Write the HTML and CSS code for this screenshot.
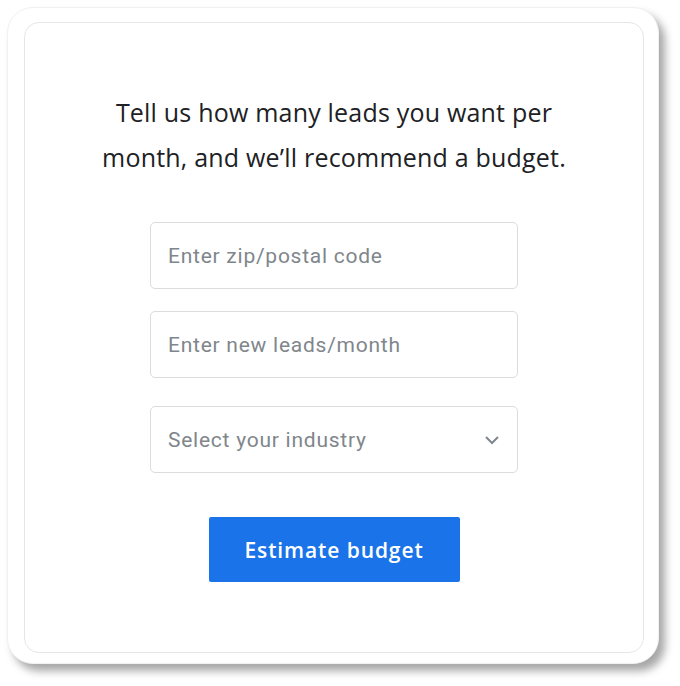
FILE: index.html
```html
<!DOCTYPE html>
<html lang="en">
<head>
<meta charset="utf-8">
<title>Estimate budget</title>
<link rel="stylesheet" href="styles.css">
</head>
<body>
<div class="frame">
  <div class="card">
    <p class="title">Tell us how many leads you want per<br>month, and we’ll recommend a budget.</p>
    <form class="form">
      <div class="field">Enter zip/postal code</div>
      <div class="field">Enter new leads/month</div>
      <div class="field select">
        <span>Select your industry</span>
        <svg class="chev" width="16" height="10" viewBox="0 0 16 10"><path d="M2 2 L8 8 L14 2" fill="none" stroke="#80868b" stroke-width="2"/></svg>
      </div>
      <button type="button" class="btn">Estimate budget</button>
    </form>
  </div>
</div>
</body>
</html>
```
FILE: styles.css
```css
html, body { margin: 0; padding: 0; background: #fff; }
body { width: 680px; height: 686px; font-family: Roboto, "Noto Sans", sans-serif; }
.frame {
  box-sizing: border-box;
  margin: 7px 0 0 7px;
  width: 652px;
  height: 657px;
  border-radius: 26px;
  background: #fff;
  border: 1px solid #f1f1f1;
  box-shadow: 6px 7px 8px rgba(0,0,0,0.35);
  padding: 14px 14px 10px 16px;
}
.card {
  box-sizing: border-box;
  width: 620px;
  height: 631px;
  border: 1px solid #e6e6e6;
  border-radius: 15px;
  padding-top: 67px;
  display: flex;
  flex-direction: column;
  align-items: center;
}
.title {
  margin: 0;
  font-family: "Open Sans", Roboto, sans-serif;
  font-size: 25px;
  line-height: 45px;
  letter-spacing: 0.2px;
  color: #202124;
  text-align: center;
}
.form {
  margin-top: 42px;
  display: flex;
  flex-direction: column;
  align-items: center;
}
.field {
  box-sizing: border-box;
  width: 368px;
  height: 67px;
  border: 1px solid #dadce0;
  border-radius: 5px;
  padding: 0 17px;
  display: flex;
  align-items: center;
  font-size: 21px;
  letter-spacing: 0.75px;
  color: #80868b;
  margin-bottom: 22px;
}
.field.select { margin-top: 6px; justify-content: space-between; margin-bottom: 44px; }
.btn {
  width: 251px;
  height: 65px;
  border: none;
  border-radius: 2px;
  background: #1a73e8;
  color: #fff;
  font-family: "Open Sans", Roboto, sans-serif;
  font-size: 21px;
  font-weight: 600;
  letter-spacing: 0.9px;
  padding: 0;
}
```
